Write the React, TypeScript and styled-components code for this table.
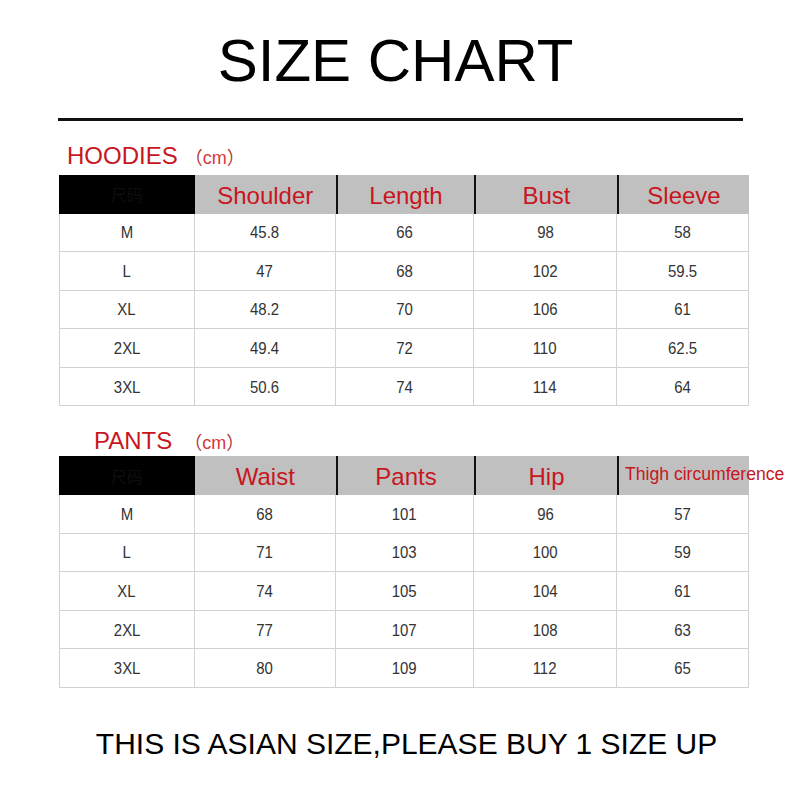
import React from "react";
import styled, { createGlobalStyle } from "styled-components";

const GlobalStyle = createGlobalStyle`
  html, body { margin: 0; padding: 0; background: #ffffff; }
  body { font-family: "Liberation Sans", Arial, sans-serif; }
  * { box-sizing: border-box; }
`;

const RED = "#c8161e";

const Page = styled.div`
  width: 800px;
  height: 800px;
  background: #fff;
  display: flex;
  flex-direction: column;
  overflow: hidden;
`;

const Title = styled.h1`
  margin: 31px 0 0 0;
  padding-right: 9px;
  font-family: "Liberation Sans", Arial, sans-serif;
  font-weight: 400;
  font-size: 60px;
  line-height: 60px;
  color: #000;
  text-align: center;
`;

const Rule = styled.div`
  margin: 27px 0 0 58px;
  width: 685px;
  height: 3px;
  background: #111;
`;

const Heading = styled.div<{ $indent: number; $top: number }>`
  display: flex;
  align-items: baseline;
  margin: ${(p) => p.$top}px 0 0 ${(p) => p.$indent}px;
  height: 24px;
  line-height: 24px;
`;

const HeadingLabel = styled.span`
  font-size: 24px;
  color: ${RED};
`;

const Unit = styled.span<{ $gap: number }>`
  margin-left: ${(p) => p.$gap}px;
  font-size: 18px;
  color: #b23a3a;
  font-family: "Noto Sans CJK SC", "Liberation Sans", sans-serif;
`;

const UnitCm = styled.span`
  color: #d9363b;
  font-family: "Liberation Sans", Arial, sans-serif;
`;

const Table = styled.div<{ $top: number }>`
  margin: ${(p) => p.$top}px 0 0 59px;
  width: 690px;
  display: grid;
  grid-template-columns: 135.5px 141.5px 138px 143px 132px;
  grid-template-rows: 38.5px repeat(5, 38.6px);
`;

const CornerCell = styled.div`
  background: #000;
  display: flex;
  align-items: center;
  justify-content: center;
  color: #0e0e0e;
  font-size: 16px;
  font-family: "Noto Sans CJK SC", sans-serif;
`;

const HeadCell = styled.div<{ $divider: boolean; $small?: boolean }>`
  background: #c0c0c0;
  border-left: ${(p) => (p.$divider ? "2px solid #111" : "none")};
  display: flex;
  align-items: center;
  justify-content: ${(p) => (p.$small ? "flex-start" : "center")};
  padding: ${(p) => (p.$small ? "0 0 2px 6px" : "3px 0 0 0")};
  color: ${RED};
  font-size: ${(p) => (p.$small ? "17.6px" : "24px")};
  white-space: nowrap;
  overflow: visible;
`;

const BodyCell = styled.div<{ $first: boolean }>`
  border-bottom: 1px solid #d2d2d2;
  border-right: 1px solid #d2d2d2;
  border-left: ${(p) => (p.$first ? "1px solid #d2d2d2" : "none")};
  display: flex;
  align-items: center;
  justify-content: center;
  padding-top: 2px;
  color: #333;
  font-size: 17px;
`;

const CellText = styled.span`
  display: inline-block;
  transform: scaleX(0.88);
`;

const Footer = styled.div`
  margin-top: 41px;
  padding-left: 13px;
  text-align: center;
  font-size: 30px;
  line-height: 29px;
  color: #000;
  white-space: nowrap;
`;

type Section = {
  name: string;
  indent: number;
  unitGap: number;
  headTop: number;
  tableTop: number;
  headers: string[];
  smallLast?: boolean;
  rows: string[][];
};

const sections: Section[] = [
  {
    name: "HOODIES",
    indent: 67,
    unitGap: 7,
    headTop: 23,
    tableTop: 7,
    headers: ["Shoulder", "Length", "Bust", "Sleeve"],
    rows: [
      ["M", "45.8", "66", "98", "58"],
      ["L", "47", "68", "102", "59.5"],
      ["XL", "48.2", "70", "106", "61"],
      ["2XL", "49.4", "72", "110", "62.5"],
      ["3XL", "50.6", "74", "114", "64"],
    ],
  },
  {
    name: "PANTS",
    indent: 94,
    unitGap: 12,
    headTop: 23,
    tableTop: 3,
    headers: ["Waist", "Pants", "Hip", "Thigh circumference"],
    smallLast: true,
    rows: [
      ["M", "68", "101", "96", "57"],
      ["L", "71", "103", "100", "59"],
      ["XL", "74", "105", "104", "61"],
      ["2XL", "77", "107", "108", "63"],
      ["3XL", "80", "109", "112", "65"],
    ],
  },
];

function SizeSection({ s }: { s: Section }) {
  return (
    <>
      <Heading $indent={s.indent} $top={s.headTop}>
        <HeadingLabel>{s.name}</HeadingLabel>
        <Unit $gap={s.unitGap}>
          （<UnitCm>cm</UnitCm>）
        </Unit>
      </Heading>
      <Table $top={s.tableTop}>
        <CornerCell>尺码</CornerCell>
        {s.headers.map((h, i) => (
          <HeadCell
            key={h}
            $divider={i > 0}
            $small={s.smallLast && i === s.headers.length - 1}
          >
            {h}
          </HeadCell>
        ))}
        {s.rows.map((r, ri) =>
          r.map((v, ci) => (
            <BodyCell key={`${ri}-${ci}`} $first={ci === 0}>
              <CellText>{v}</CellText>
            </BodyCell>
          ))
        )}
      </Table>
    </>
  );
}

export default function App() {
  return (
    <>
      <GlobalStyle />
      <Page>
        <Title>SIZE CHART</Title>
        <Rule />
        {sections.map((s) => (
          <SizeSection key={s.name} s={s} />
        ))}
        <Footer>THIS IS ASIAN SIZE,PLEASE BUY 1 SIZE UP</Footer>
      </Page>
    </>
  );
}
